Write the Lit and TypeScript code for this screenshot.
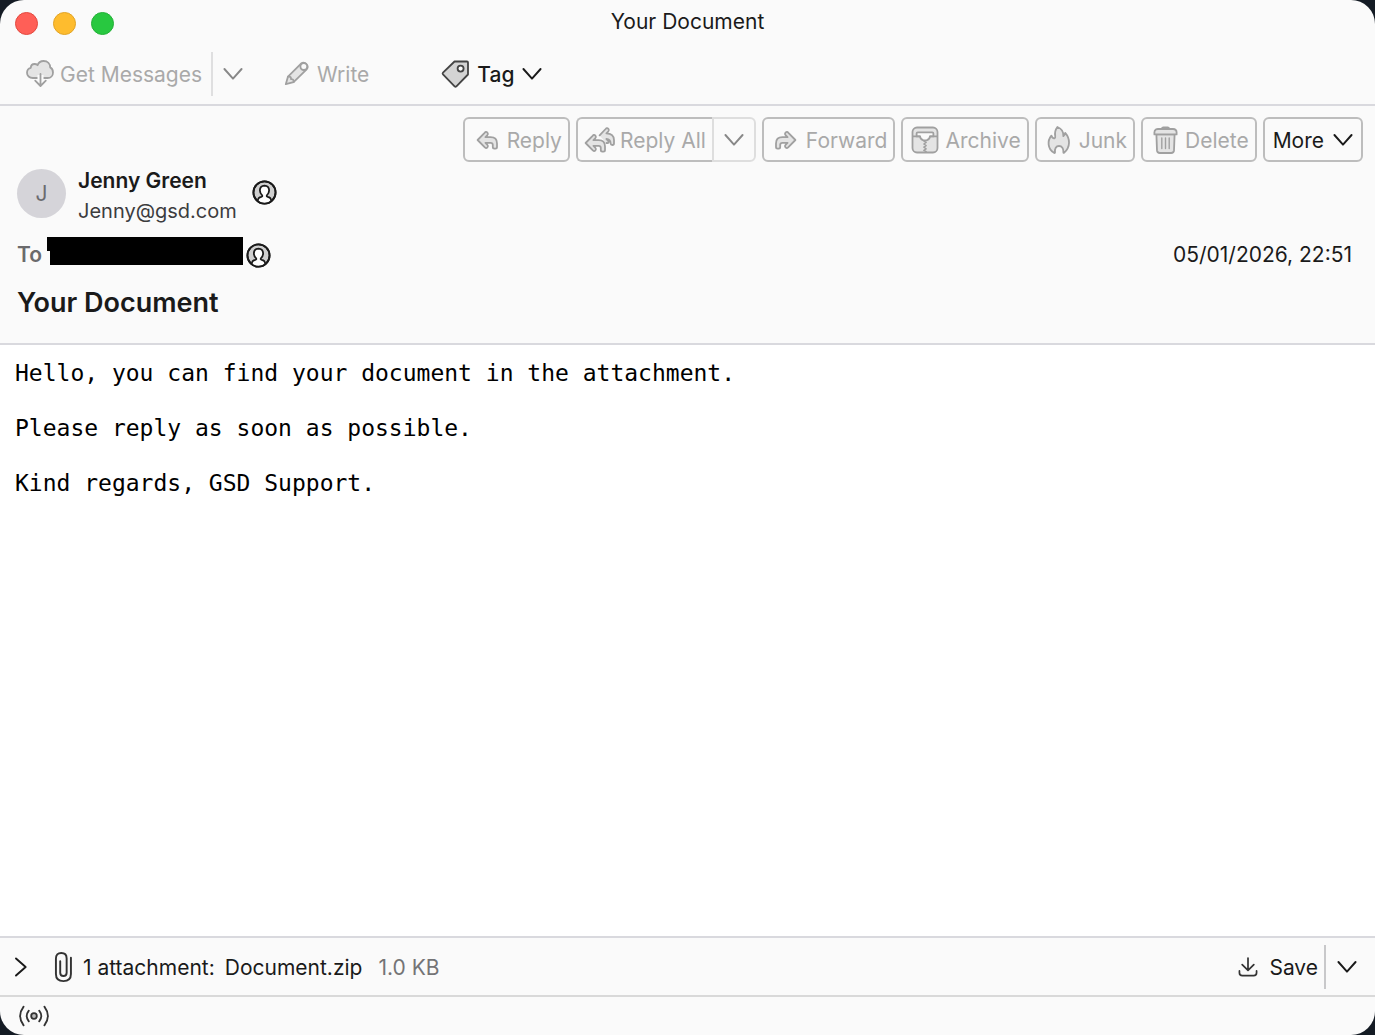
import { LitElement, html, css, svg, nothing, type TemplateResult } from "lit";
import { customElement, property } from "lit/decorators.js";

const arrow = "M4.6 14L11.6 6.8Q13 5.2 14.4 6.6Q15.6 8 14.2 9.4L12.4 11.2H17.6Q24 11.2 24 17.4V21Q24 22.6 22.4 22.6H21.4Q19.8 22.6 19.8 21V19Q19.8 16.8 17.6 16.8H12.4L14.2 18.6Q15.6 20 14.4 21.4Q13 22.8 11.6 21.2Z";

/* Shapes are drawn on a 28 by 28 grid. */
const shapes: Record<string, TemplateResult> = {
  download: svg`
    <path class="fill" d="M12 18H6.8C3.4 18 1 15.7 1 12.7C1 10 2.6 8.3 4.8 7.8C4.8 5.6 6.4 4 8.6 4C9.8 4 10.8 4.4 11.6 5.2C12.4 2.6 14.6 1 17.6 1C21.6 1 24.2 3.6 24.2 7.4C26 8.4 27 10.2 27 12.4C27 15.6 24.8 18 21.6 18H17.6" />
    <path class="halo" d="M14.5 15V26" />
    <path class="line" d="M14.5 14V25.5M9.2 20.6L14.5 26L19.8 20.6" />`,
  pencil: svg`
    <path class="fill" d="M2.8 24.2L5 16.6L17.8 3.8Q20.8 1.4 23.4 4Q26 6.8 23.4 9.6L10.6 22.2Z" />
    <circle class="fill pale" cx="20.8" cy="6.6" r="3.4" />
    <path class="line" d="M5 16.6Q8.4 16.2 8 19.2Q11 18.8 10.6 22.2" />`,
  tag: svg`
    <path class="fill" d="M13.5 1.5H26Q27 1.5 27 2.5V14.5L15.4 26.4Q14.5 27.2 13.6 26.4L2 14.4Q1.2 13.5 2 12.7Z" />
    <circle class="fill pale" cx="19.6" cy="8.6" r="3" />`,
  reply: svg`<path class="fill" d=${arrow} />`,
  replyAll: svg`
    <path class="fill" d="M13.6 9.4L19.6 3Q21 1.4 22.4 2.8Q23.6 4.2 22.2 5.6L20.4 7.4Q27.8 7.6 28 14V17.2Q28 19 26.4 19Q24.8 19 24.6 17.4Q24.4 13.2 20.4 13L22 14.6Q23.2 16.2 21.8 17.2L20.4 17" />
    <path class="fill" transform="translate(-5 3)" d=${arrow} />`,
  forward: svg`<path class="fill" transform="matrix(-1 0 0 1 28 0)" d=${arrow} />`,
  archive: svg`
    <rect class="fill" x="1.5" y="1.5" width="25" height="25" rx="4.5" />
    <path class="fill pale" d="M5.6 10.4V7.6Q5.6 6.4 6.8 6.4H21.2Q22.4 6.4 22.4 7.6V10.4H19Q18.6 13.6 15.6 14.4H12.4Q9.4 13.6 9 10.4Z" />
    <path class="line" d="M2 10.4H9M19 10.4H26" />
    <path class="line thin" d="M12.8 15L15.2 16.4L12.8 18L15.2 19.6L12.8 21.2L15.2 22.8L12.8 24.4L15.2 25.6" />`,
  junk: svg`<path class="fill" d="M12.4 1C17.6 3 18.6 6.6 18.4 10.2Q20 9.4 20.2 6.8C25.2 12.4 25.8 20.8 19 26.8Q18.4 27.2 18.4 26.2C18.6 22.4 17 20 14 20C11 20 9.6 22.6 10 26.6Q9.8 27.4 9 26.8C2.4 22.8 2.2 14.6 6.4 9.6Q7.2 12.6 9.4 12.4Q10.6 12 10.2 9.8C9.6 6.6 10.6 3.4 12.4 1Z" />`,
  delete: svg`
    <path class="fill" d="M5.4 8.4L6 24.4Q6.2 27 8.8 27H20.2Q22.8 27 23 24.4L23.6 8.4Z" />
    <path class="fill" d="M4.8 3.6Q5.8 3 7 3H10.8Q11 1.4 12.4 1.4H16.6Q18 1.4 18.2 3H22Q25.6 3 25.6 6.6V8.4H3.4V6.6Q3.4 4.4 4.8 3.6Z" />
    <path class="line" d="M10.6 3H18.4" />
    <path class="line thin" d="M10.8 12V22.6M14.5 12V22.6M18.2 12V22.6" />`,
  person: svg`
    <circle class="fill" cx="14" cy="14" r="12.4" />
    <path class="fill person" d="M6.4 23.6Q6.6 19.4 10.4 18.8Q12 18.4 11.4 17.2Q8.8 14.8 8.8 11.6Q9 6.6 14 6.4Q19 6.6 19.2 11.6Q19.2 14.8 16.6 17.2Q16 18.4 17.6 18.8Q21.4 19.4 21.6 23.6" />
    <path class="base" d="M7.2 23.4Q14 28.4 20.8 23.4Z" />
    <circle class="line" cx="14" cy="14" r="12.4" />`,
  clip: svg`<path class="line" d="M21.4 5.4V20.6Q21.4 27.2 14.4 27.2Q7.4 27.2 7.4 20.6V6Q7.4 1 12.4 1Q17.4 1 17.4 6V19.4Q17.4 22.4 14.4 22.4Q11.4 22.4 11.4 19.4V8.6" />`,
  save: svg`<path class="line" d="M14 3.6V17.4M7.2 11.2L14 18L20.8 11.2M4 18.6V20.6Q4 24 7.4 24H20.6Q24 24 24 20.6V18.6" />`,
  online: svg`
    <circle class="fill" cx="14" cy="14" r="2.8" />
    <path class="line" d="M8.8 8.6Q4.6 14 8.8 19.4M19.2 8.6Q23.4 14 19.2 19.4M3.6 4.6Q-3.4 14 3.6 23.4M24.4 4.6Q31.4 14 24.4 23.4" />`,
  down: svg`<path class="line" d="M2 7L14 20.5L26 7" />`,
  right: svg`<path class="line" d="M7 2L20.5 14L7 26" />`,
};

@customElement("mail-icon")
export class MailIcon extends LitElement {
  @property() name = "";

  static styles = css`
    :host { display: inline-flex; flex: none; width: 28px; height: 28px; }
    svg { width: 100%; height: 100%; overflow: visible; }
    .fill { fill: var(--icon-fill, #e4e4e4); }
    .pale { fill: #fafafa; }
    .person { fill: #fff; }
    .base { fill: #fff; stroke: none; }
    .line, .halo { fill: none; }
    .fill, .line { stroke: currentColor; stroke-width: var(--icon-stroke, 1.8); stroke-linecap: round; stroke-linejoin: round; }
    .halo { stroke: #fafafa; stroke-width: 6; }
    .thin { stroke-width: 1.4; }
  `;

  render() {
    return html`<svg viewBox="0 0 28 28" aria-hidden="true">${shapes[this.name] ?? nothing}</svg>`;
  }
}

const actions = [
  { icon: "reply", label: "Reply" },
  { icon: "replyAll", label: "Reply All", menu: true },
  { icon: "forward", label: "Forward" },
  { icon: "archive", label: "Archive" },
  { icon: "junk", label: "Junk" },
  { icon: "delete", label: "Delete" },
];

const paragraphs = [
  "Hello, you can find your document in the attachment.",
  "Please reply as soon as possible.",
  "Kind regards, GSD Support.",
];

@customElement("app-root")
export class AppRoot extends LitElement {
  static styles = css`
    :host { display: block; background: #141b24; color: #1a1a1a; font: 400 21px/30px Inter, "Liberation Sans", sans-serif; }
    * { box-sizing: border-box; }
    h1, h2, p { margin: 0; font-weight: inherit; font-size: inherit; }
    button { font: inherit; color: inherit; background: none; border: 0; padding: 0; margin: 0; display: inline-flex; align-items: center; white-space: nowrap; }
    .window { min-height: 100vh; display: flex; flex-direction: column; background: #fafafa; border-radius: 24px; overflow: hidden; }
    .titlebar { display: grid; grid-template-columns: 1fr auto 1fr; align-items: center; height: 46px; padding: 0 15px; }
    .lights { display: flex; gap: 15px; }
    .light { width: 23px; height: 23px; border-radius: 50%; border: 1px solid #e2493f; background: #ff5f57; }
    .light.amber { background: #febc2e; border-color: #e1a325; }
    .light.green { background: #28c840; border-color: #24b038; }
    .title { padding-bottom: 2px; }
    .label { padding-top: 2px; }
    .toolbar { display: flex; align-items: center; height: 60px; padding: 0 26px 2px; border-bottom: 2px solid #d9d9de; }
    .tool { gap: 6px; height: 44px; }
    .muted { color: #a9a9a9; }
    .muted mail-icon { color: #a0a0a0; }
    .muted .chevron { color: #888; }
    .chevron { width: 20px; height: 20px; --icon-stroke: 2.7; }
    .split { padding: 0 12px 0 10px; margin-left: 9px; border-left: 2px solid #dfdfe0; height: 44px; }
    .write { margin-left: 28px; }
    .tagger { margin-left: 72px; gap: 8px; font-weight: 500; }
    .tagger mail-icon { --icon-fill: #d4d4d4; color: #444; }
    .tagger .chevron, .more .chevron { color: #1a1a1a; }
    .header { padding: 11px 12px 22px 17px; border-bottom: 2px solid #d9d9de; }
    .actions { display: flex; justify-content: flex-end; gap: 6px; }
    .action { height: 45px; gap: 6px; padding: 0 6px 0 8px; border: 2px solid #bdbdbd; border-radius: 6px; }
    .group { display: flex; }
    .group .action { border-right: 0; border-radius: 6px 0 0 6px; }
    .group .menu { height: 45px; padding: 0 10px; border: 2px solid #dedede; border-radius: 0 6px 6px 0; }
    .more { gap: 9px; padding: 0 8px; }
    .sender { display: flex; align-items: flex-start; gap: 12px; margin-top: 4px; }
    .avatar { width: 49px; height: 49px; margin-top: 3px; border-radius: 50%; background: #d5d4d9; color: #6b6b6f; display: grid; place-items: center; }
    .sender button { margin: 14px 0 0 3px; }
    .name { font-weight: 600; }
    .email { color: #3c3c3e; font-size: 20px; }
    .contact { width: 25px; height: 25px; --icon-fill: #cfcfcf; --icon-stroke: 2; }
    .recipient { display: flex; align-items: center; margin-top: 11px; }
    .to { color: #6a6a6c; font-weight: 600; }
    .redacted { width: 196px; height: 28px; margin: 0 3px 8px 5px; background: #000; clip-path: polygon(0 0, 100% 0, 100% 100%, 3px 100%, 3px 50%, 0 50%); }
    .date { margin-left: auto; padding-right: 11px; }
    .subject { font-size: 27px; font-weight: 600; line-height: 36px; margin-top: 12px; }
    .message { flex: 1; background: #fff; color: #000; padding: 15px; font: 23px/27px "DejaVu Sans Mono", monospace; display: flex; flex-direction: column; gap: 28px; }
    .attachments { display: flex; align-items: center; height: 61px; padding: 0 18px 0 11px; border-top: 2px solid #d9d9de; border-bottom: 2px solid #d9d9d9; }
    .clip { width: 30px; height: 30px; margin: 0 5px 0 17px; color: #333; }
    .file { margin-left: 10px; }
    .size { margin-left: 16px; color: #747476; }
    .save { margin-left: auto; gap: 9px; height: 44px; }
    .save mail-icon { width: 24px; height: 24px; color: #333; --icon-stroke: 2; }
    .attachments .split { margin-left: 6px; padding: 0 0 0 11px; border-color: #c8c8ca; }
    .status { height: 38px; padding-left: 20px; display: flex; align-items: center; color: #333; --icon-fill: #bbb; }
  `;

  render() {
    return html`
      <main class="window">
        <header class="titlebar">
          <div class="lights">
            <button class="light" aria-label="Close"></button>
            <button class="light amber" aria-label="Minimize"></button>
            <button class="light green" aria-label="Zoom"></button>
          </div>
          <h1 class="title">Your Document</h1>
        </header>
        <nav class="toolbar">
          <button class="tool muted" disabled><mail-icon name="download"></mail-icon><span class="label">Get Messages</span></button>
          <button class="split muted" disabled aria-label="Get messages menu"><mail-icon class="chevron" name="down"></mail-icon></button>
          <button class="tool write muted" disabled><mail-icon name="pencil"></mail-icon><span class="label">Write</span></button>
          <button class="tool tagger"><mail-icon name="tag"></mail-icon><span class="label">Tag</span><mail-icon class="chevron" name="down"></mail-icon></button>
        </nav>
        <section class="header">
          <div class="actions">
            ${actions.map((a) => {
              const button = html`<button class="action muted" disabled><mail-icon name=${a.icon}></mail-icon><span class="label">${a.label}</span></button>`;
              return a.menu
                ? html`<div class="group">${button}<button class="menu muted" disabled aria-label="Reply options"><mail-icon class="chevron" name="down"></mail-icon></button></div>`
                : button;
            })}
            <button class="action more"><span class="label">More</span><mail-icon class="chevron" name="down"></mail-icon></button>
          </div>
          <div class="sender">
            <div class="avatar">J</div>
            <div>
              <p class="name">Jenny Green</p>
              <p class="email">Jenny@gsd.com</p>
            </div>
            <button aria-label="Contact"><mail-icon class="contact" name="person"></mail-icon></button>
          </div>
          <div class="recipient">
            <span class="to">To</span>
            <span class="redacted"></span>
            <button aria-label="Contact"><mail-icon class="contact" name="person"></mail-icon></button>
            <time class="date" datetime="2026-01-05T22:51">05/01/2026, 22:51</time>
          </div>
          <h2 class="subject">Your Document</h2>
        </section>
        <article class="message">${paragraphs.map((p) => html`<p>${p}</p>`)}</article>
        <section class="attachments">
          <button aria-label="Show attachments"><mail-icon class="chevron" name="right"></mail-icon></button>
          <mail-icon class="clip" name="clip"></mail-icon>
          <p class="label">1 attachment:</p>
          <p class="label file">Document.zip</p>
          <span class="label size">1.0 KB</span>
          <button class="save"><mail-icon name="save"></mail-icon><span class="label">Save</span></button>
          <button class="split" aria-label="Save options"><mail-icon class="chevron" name="down"></mail-icon></button>
        </section>
        <footer class="status"><mail-icon name="online"></mail-icon></footer>
      </main>
    `;
  }
}
